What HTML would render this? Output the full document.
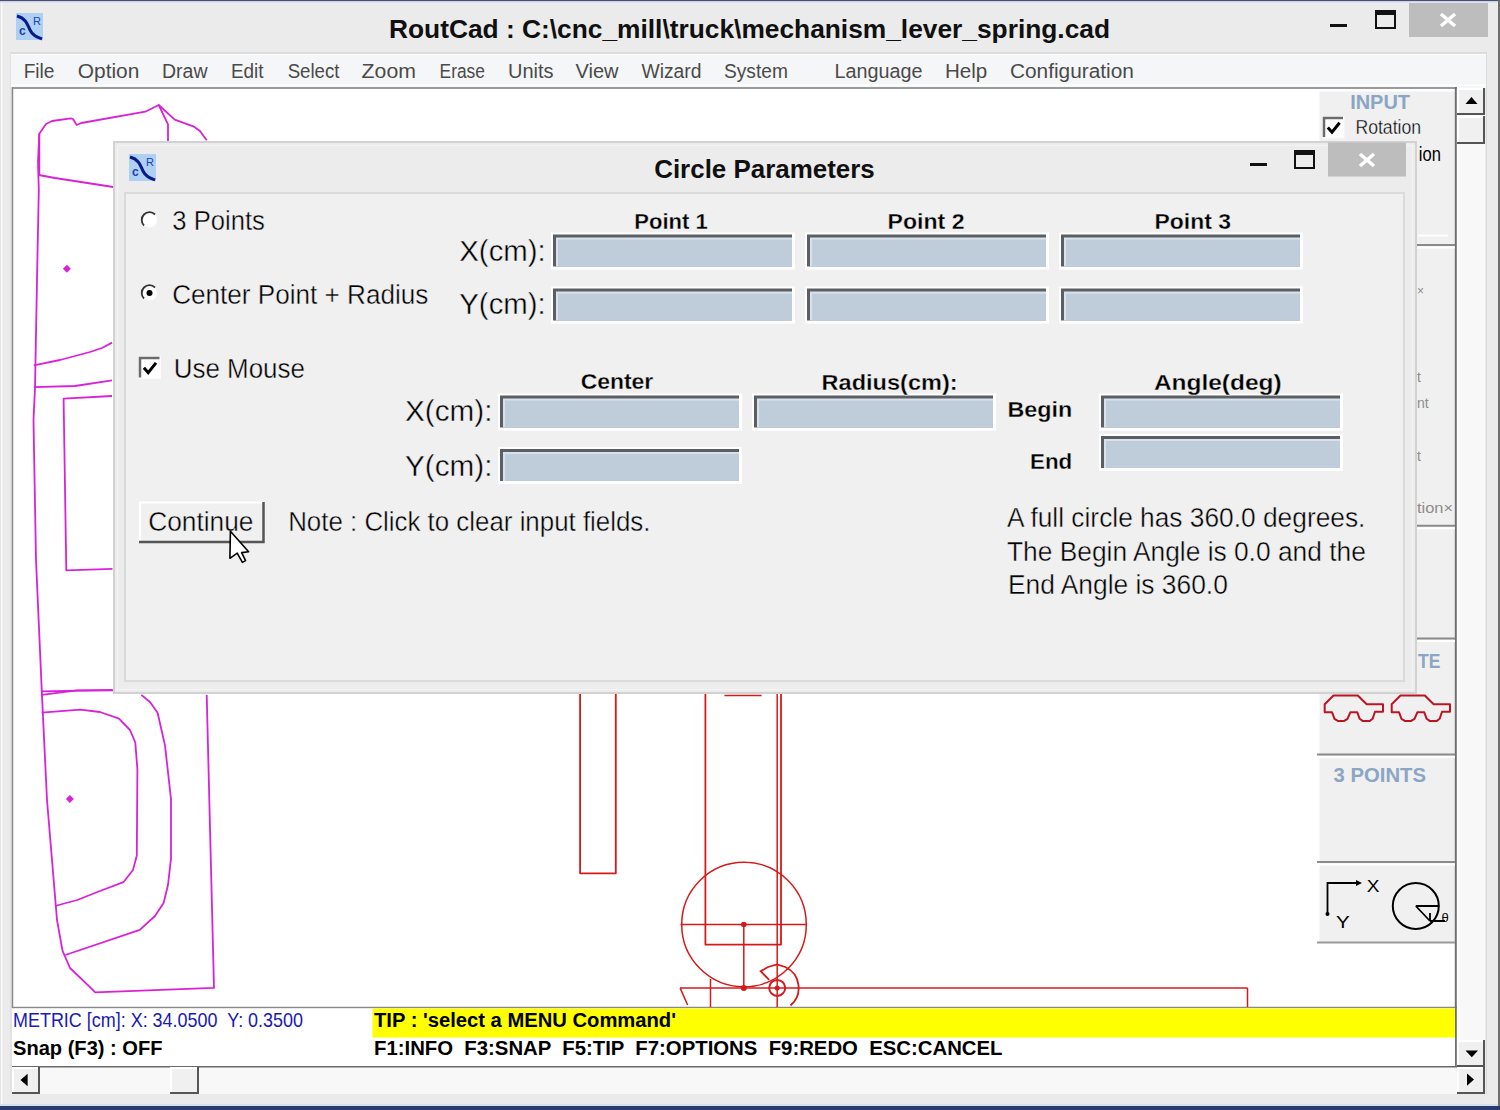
<!DOCTYPE html>
<html><head><meta charset="utf-8"><style>
html,body{margin:0;padding:0;width:1500px;height:1110px;overflow:hidden;background:#efefef}
svg{display:block}
</style></head><body>
<svg width="1500" height="1110" viewBox="0 0 1500 1110">
<rect x="0" y="0" width="1500" height="1110" fill="#ebebeb" />
<rect x="0" y="0" width="1" height="1110" fill="#e4e4e4" />
<rect x="1" y="0" width="1.5" height="1110" fill="#fafafa" />
<rect x="10" y="52" width="2" height="1040" fill="#e2e2e2" />
<rect x="0" y="0" width="1500" height="1.3" fill="#4a5078" />
<rect x="0" y="1.5" width="1500" height="1.5" fill="#dfe6f2" />
<rect x="0" y="1104" width="1500" height="2" fill="#d4e0ee" />
<rect x="0" y="1106" width="1500" height="4" fill="#2a3c6c" />
<rect x="1498" y="0" width="2" height="1106" fill="#6e6e6e" />
<rect x="3" y="3" width="1494" height="49" fill="#ebebeb" />
<rect x="16" y="13" width="27" height="27" fill="#aed0f2" />
<path d="M17,16 C25,18 27,23 30,30 C33,36 37,37 42,39" stroke="#0a1a8a" stroke-width="3" fill="none"/>
<text x="33" y="25" font-family="Liberation Sans" font-size="11" fill="#2040b0"    xml:space="preserve">R</text>
<text x="19" y="35" font-family="Liberation Sans" font-size="12" fill="#2040b0" font-weight="bold"   xml:space="preserve">c</text>
<text x="389" y="37.6" font-family="Liberation Sans" font-size="25.5" fill="#101010" font-weight="bold" textLength="721.0" lengthAdjust="spacingAndGlyphs"  xml:space="preserve">RoutCad : C:\cnc_mill\truck\mechanism_lever_spring.cad</text>
<rect x="1330" y="24" width="17" height="3" fill="#111" />
<rect x="1376" y="11" width="19" height="17" fill="none" stroke="#111" stroke-width="2"/>
<rect x="1376" y="11" width="19" height="4" fill="#111" />
<rect x="1409" y="3" width="79" height="34" fill="#bdbdbd" />
<path d="M1441,14 L1455,26 M1455,14 L1441,26" stroke="#fff" stroke-width="3.5"/>
<rect x="11" y="52" width="1476" height="36" fill="#f5f6f7" />
<rect x="11" y="52" width="1476" height="2" fill="#dcdcdc" />
<rect x="11" y="54" width="1476" height="1" fill="#fdfdfd" />
<rect x="11" y="84.5" width="1476" height="1.5" fill="#fdfdfd" />
<text x="23.7" y="77.5" font-family="Liberation Sans" font-size="20" fill="#4a4a4a"  textLength="30.8" lengthAdjust="spacingAndGlyphs"  xml:space="preserve">File</text>
<text x="77.8" y="77.5" font-family="Liberation Sans" font-size="20" fill="#4a4a4a"  textLength="61.5" lengthAdjust="spacingAndGlyphs"  xml:space="preserve">Option</text>
<text x="162" y="77.5" font-family="Liberation Sans" font-size="20" fill="#4a4a4a"  textLength="45.5" lengthAdjust="spacingAndGlyphs"  xml:space="preserve">Draw</text>
<text x="230.9" y="77.5" font-family="Liberation Sans" font-size="20" fill="#4a4a4a"  textLength="32.6" lengthAdjust="spacingAndGlyphs"  xml:space="preserve">Edit</text>
<text x="287.7" y="77.5" font-family="Liberation Sans" font-size="20" fill="#4a4a4a"  textLength="51.8" lengthAdjust="spacingAndGlyphs"  xml:space="preserve">Select</text>
<text x="361.6" y="77.5" font-family="Liberation Sans" font-size="20" fill="#4a4a4a"  textLength="54.3" lengthAdjust="spacingAndGlyphs"  xml:space="preserve">Zoom</text>
<text x="439.6" y="77.5" font-family="Liberation Sans" font-size="20" fill="#4a4a4a"  textLength="45.3" lengthAdjust="spacingAndGlyphs"  xml:space="preserve">Erase</text>
<text x="508" y="77.5" font-family="Liberation Sans" font-size="20" fill="#4a4a4a"  textLength="45.5" lengthAdjust="spacingAndGlyphs"  xml:space="preserve">Units</text>
<text x="575.5" y="77.5" font-family="Liberation Sans" font-size="20" fill="#4a4a4a"  textLength="43.0" lengthAdjust="spacingAndGlyphs"  xml:space="preserve">View</text>
<text x="641.5" y="77.5" font-family="Liberation Sans" font-size="20" fill="#4a4a4a"  textLength="60.0" lengthAdjust="spacingAndGlyphs"  xml:space="preserve">Wizard</text>
<text x="724" y="77.5" font-family="Liberation Sans" font-size="20" fill="#4a4a4a"  textLength="63.9" lengthAdjust="spacingAndGlyphs"  xml:space="preserve">System</text>
<text x="834.5" y="77.5" font-family="Liberation Sans" font-size="20" fill="#4a4a4a"  textLength="87.9" lengthAdjust="spacingAndGlyphs"  xml:space="preserve">Language</text>
<text x="944.9" y="77.5" font-family="Liberation Sans" font-size="20" fill="#4a4a4a"  textLength="42.3" lengthAdjust="spacingAndGlyphs"  xml:space="preserve">Help</text>
<text x="1010" y="77.5" font-family="Liberation Sans" font-size="20" fill="#4a4a4a"  textLength="123.8" lengthAdjust="spacingAndGlyphs"  xml:space="preserve">Configuration</text>
<rect x="12" y="87" width="1445" height="921" fill="#ffffff" />
<line x1="12" y1="88" x2="1457" y2="88" stroke="#7a7a7a" stroke-width="1.6" />
<line x1="12.5" y1="87" x2="12.5" y2="1008" stroke="#8a8a8a" stroke-width="1.5" />
<line x1="12" y1="1007.5" x2="1457" y2="1007.5" stroke="#8a8a8a" stroke-width="1.5" />
<polyline points="39.3,175.0 39.3,133.7 46.0,124.0 52.0,121.0 70.7,118.3 73.0,119.0 76.7,125.0 81.3,123.0 145.3,111.7 158.7,105.0 174.7,119.7 193.3,126.3 200.0,131.0 206.7,140.3" fill="none" stroke="#d822d8" stroke-width="1.8" stroke-linejoin="round"/>
<polyline points="158.7,105.0 168.0,124.3 168.0,142.0" fill="none" stroke="#d822d8" stroke-width="1.8" stroke-linejoin="round"/>
<polyline points="38.8,190.0 38.0,162.0 39.3,133.7" fill="none" stroke="#d822d8" stroke-width="1.8" stroke-linejoin="round"/>
<polyline points="38.8,175.0 55.0,178.0 113.3,187.0" fill="none" stroke="#d822d8" stroke-width="1.8" stroke-linejoin="round"/>
<polyline points="38.8,190.0 37.0,280.0 35.0,388.0 33.5,420.0 36.0,560.0 41.8,691.4 47.0,800.0 57.0,920.0 62.5,950.6 70.0,968.0 89.2,986.3 95.2,992.3 214.0,987.8 206.7,694.9" fill="none" stroke="#d822d8" stroke-width="1.8" stroke-linejoin="round"/>
<polyline points="33.8,365.4 60.0,360.0 90.0,352.0 102.0,348.0 112.1,342.6" fill="none" stroke="#d822d8" stroke-width="1.8" stroke-linejoin="round"/>
<polyline points="33.8,387.2 75.0,386.0 112.0,380.3" fill="none" stroke="#d822d8" stroke-width="1.8" stroke-linejoin="round"/>
<polyline points="112.0,396.0 63.6,398.7 66.3,570.3 112.5,568.9" fill="none" stroke="#d822d8" stroke-width="1.8" stroke-linejoin="round"/>
<polyline points="41.8,691.4 112.5,690.0" fill="none" stroke="#d822d8" stroke-width="1.8" stroke-linejoin="round"/>
<polyline points="41.6,694.9 77.3,690.4 113.0,690.4" fill="none" stroke="#d822d8" stroke-width="1.8" stroke-linejoin="round"/>
<polyline points="41.6,712.7 80.3,709.7 100.0,712.0 119.0,718.7 130.0,730.0 135.3,742.5 137.4,769.2 136.8,855.5 133.0,870.0 123.4,882.2 100.0,891.0 77.3,900.0 55.0,906.0" fill="none" stroke="#d822d8" stroke-width="1.8" stroke-linejoin="round"/>
<polyline points="141.3,694.9 150.0,702.0 157.6,712.7 165.0,745.4 171.0,799.0 171.0,858.4 168.0,885.0 163.6,903.0 155.0,916.0 139.8,929.8 65.4,955.0" fill="none" stroke="#d822d8" stroke-width="1.8" stroke-linejoin="round"/>
<path d="M66.9,264.7 L70.9,268.7 L66.9,272.7 L62.900000000000006,268.7 Z" fill="#d822d8"/>
<path d="M69.9,795 L73.9,799 L69.9,803 L65.9,799 Z" fill="#d822d8"/>
<polyline points="580.1,693.0 580.1,873.3 615.8,873.3 615.8,693.0" fill="none" stroke="#d41a1a" stroke-width="1.8" stroke-linejoin="round"/>
<polyline points="705.4,693.0 705.4,944.6 781.0,944.6 781.0,693.0" fill="none" stroke="#d41a1a" stroke-width="1.8" stroke-linejoin="round"/>
<line x1="777.2" y1="693" x2="777.2" y2="1007" stroke="#d41a1a" stroke-width="1.5" />
<line x1="724.4" y1="695.5" x2="761.6" y2="695.5" stroke="#d41a1a" stroke-width="1.5" />
<circle cx="744" cy="924.5" r="62.3" fill="none" stroke="#d41a1a" stroke-width="1.5"/>
<line x1="680.5" y1="924.5" x2="806.5" y2="924.5" stroke="#d41a1a" stroke-width="1.5" />
<line x1="743.8" y1="924.5" x2="743.8" y2="988" stroke="#d41a1a" stroke-width="1.5" />
<line x1="680.1" y1="987.9" x2="1247.5" y2="987.9" stroke="#d41a1a" stroke-width="1.5" />
<line x1="1247.5" y1="987.9" x2="1247.5" y2="1007" stroke="#d41a1a" stroke-width="1.5" />
<line x1="680.1" y1="987.9" x2="687.6" y2="1005" stroke="#d41a1a" stroke-width="1.5" />
<line x1="710.5" y1="979" x2="710.5" y2="1007" stroke="#d41a1a" stroke-width="1.5" />
<circle cx="777.2" cy="987.9" r="8" fill="none" stroke="#d41a1a" stroke-width="2"/>
<circle cx="743.8" cy="924.5" r="2.8" fill="#d41a1a"/>
<circle cx="743.8" cy="987.9" r="3" fill="#d41a1a"/>
<circle cx="777.2" cy="987.9" r="2.5" fill="#d41a1a"/>
<path d="M769.2,979.9 L760.7,971.3 L768.1,967 L777,964.5 L785.2,967 A23,23 0 0 1 790.5,1005.5" fill="none" stroke="#d41a1a" stroke-width="1.8"/>
<rect x="1319.5" y="91.5" width="136" height="851" fill="#f0f0f0" />
<line x1="1455.8" y1="87" x2="1455.8" y2="1067" stroke="#707070" stroke-width="2" />
<text x="1350.2" y="109" font-family="Liberation Sans" font-size="21" fill="#8ba5c5" font-weight="bold" textLength="59.8" lengthAdjust="spacingAndGlyphs"  xml:space="preserve">INPUT</text>
<rect x="1322.5" y="116.5" width="22" height="22" fill="#fbfbfb" />
<rect x="1324" y="118" width="19" height="19" fill="#ffffff" />
<path d="M1324,137 L1324,118 L1343,118" stroke="#6b6b6b" stroke-width="2.5" fill="none"/>
<path d="M1327.8,127.5 L1331.98,132.25 L1339.58,122.75" stroke="#000" stroke-width="3" fill="none"/>
<text x="1355.4" y="133.9" font-family="Liberation Sans" font-size="19.5" fill="#000"  textLength="65.7" lengthAdjust="spacingAndGlyphs"  stroke="#f0f0f0" stroke-width="0.35" xml:space="preserve">Rotation</text>
<text x="1418.8" y="160.7" font-family="Liberation Sans" font-size="19.5" fill="#000"  textLength="22.1" lengthAdjust="spacingAndGlyphs"  xml:space="preserve">ion</text>
<line x1="1418" y1="235.5" x2="1448" y2="235.5" stroke="#ffffff" stroke-width="2" />
<line x1="1317" y1="245" x2="1455" y2="245" stroke="#8a8a8a" stroke-width="2" />
<line x1="1317" y1="247.5" x2="1455" y2="247.5" stroke="#ffffff" stroke-width="2" />
<line x1="1317" y1="525.7" x2="1455" y2="525.7" stroke="#8a8a8a" stroke-width="2" />
<line x1="1317" y1="528.2" x2="1455" y2="528.2" stroke="#ffffff" stroke-width="2" />
<line x1="1317" y1="638.5" x2="1455" y2="638.5" stroke="#8a8a8a" stroke-width="2" />
<line x1="1317" y1="641.0" x2="1455" y2="641.0" stroke="#ffffff" stroke-width="2" />
<line x1="1317" y1="754.5" x2="1455" y2="754.5" stroke="#8a8a8a" stroke-width="2" />
<line x1="1317" y1="757.0" x2="1455" y2="757.0" stroke="#ffffff" stroke-width="2" />
<line x1="1317" y1="862" x2="1455" y2="862" stroke="#8a8a8a" stroke-width="2" />
<line x1="1317" y1="864.5" x2="1455" y2="864.5" stroke="#ffffff" stroke-width="2" />
<text x="1417" y="382" font-family="Liberation Sans" font-size="14" fill="#8c8c8c"    xml:space="preserve">t</text>
<text x="1417" y="407.5" font-family="Liberation Sans" font-size="14" fill="#8c8c8c"    xml:space="preserve">nt</text>
<text x="1417" y="461" font-family="Liberation Sans" font-size="14" fill="#8c8c8c"    xml:space="preserve">t</text>
<text x="1417" y="513" font-family="Liberation Sans" font-size="14" fill="#8c8c8c"  textLength="36.0" lengthAdjust="spacingAndGlyphs"  xml:space="preserve">tion×</text>
<text x="1417" y="295" font-family="Liberation Sans" font-size="12" fill="#8c8c8c"    xml:space="preserve">×</text>
<text x="1418" y="668" font-family="Liberation Sans" font-size="21" fill="#8ba5c5" font-weight="bold" textLength="22.4" lengthAdjust="spacingAndGlyphs"  xml:space="preserve">TE</text>
<polygon points="1333.5,695.5 1357.8,695.5 1366.7,704.3 1383.0,704.3 1383.0,711.8 1375.0,711.8 1372.7,718.8 1369.5,721.1 1362.9,721.1 1359.7,718.8 1357.3,712.3 1350.3,712.3 1347.5,718.8 1343.8,721.1 1338.2,721.1 1334.5,718.8 1332.1,712.3 1324.7,712.3 1324.7,704.3" fill="none" stroke="#bc1420" stroke-width="2" stroke-linejoin="round"/>
<polygon points="1400.5,695.5 1424.8,695.5 1433.7,704.3 1450.0,704.3 1450.0,711.8 1442.0,711.8 1439.7,718.8 1436.5,721.1 1429.9,721.1 1426.7,718.8 1424.3,712.3 1417.3,712.3 1414.5,718.8 1410.8,721.1 1405.2,721.1 1401.5,718.8 1399.1,712.3 1391.7,712.3 1391.7,704.3" fill="none" stroke="#bc1420" stroke-width="2" stroke-linejoin="round"/>
<text x="1333.6" y="781.6" font-family="Liberation Sans" font-size="21" fill="#8ba5c5" font-weight="bold" textLength="92.4" lengthAdjust="spacingAndGlyphs"  xml:space="preserve">3 POINTS</text>
<line x1="1317" y1="942.5" x2="1455" y2="942.5" stroke="#9a9a9a" stroke-width="2" />
<path d="M1327.5,914 L1327.5,883 L1360,883" stroke="#000" stroke-width="1.8" fill="none"/>
<path d="M1356,880 L1362,883 L1356,886 Z" fill="#000"/>
<circle cx="1327.5" cy="914" r="2" fill="#000"/>
<text x="1366.8" y="892" font-family="Liberation Sans" font-size="17" fill="#000"  textLength="12.7" lengthAdjust="spacingAndGlyphs"  xml:space="preserve">X</text>
<text x="1336" y="928" font-family="Liberation Sans" font-size="17" fill="#000"  textLength="13.7" lengthAdjust="spacingAndGlyphs"  xml:space="preserve">Y</text>
<circle cx="1415.8" cy="906" r="23" fill="none" stroke="#000" stroke-width="2"/>
<path d="M1415.8,906 L1438.8,906 M1415.8,906 L1430,921 M1430,921 L1430,913 M1430,921 L1445,921" stroke="#000" stroke-width="1.8" fill="none"/>
<text x="1441.5" y="922" font-family="Liberation Sans" font-size="13" fill="#000"    xml:space="preserve">θ</text>
<rect x="12" y="1008.5" width="1443" height="58" fill="#ffffff" />
<rect x="372.5" y="1008.5" width="1082.5" height="29" fill="#ffff00" />
<text x="13" y="1026.5" font-family="Liberation Sans" font-size="21" fill="#1a1ab4"  textLength="290.0" lengthAdjust="spacingAndGlyphs"  xml:space="preserve">METRIC [cm]: X: 34.0500  Y: 0.3500</text>
<text x="13" y="1055" font-family="Liberation Sans" font-size="20" fill="#000" font-weight="bold" textLength="149.5" lengthAdjust="spacingAndGlyphs"  xml:space="preserve">Snap (F3) : OFF</text>
<text x="374" y="1026.5" font-family="Liberation Sans" font-size="20" fill="#000" font-weight="bold" textLength="302.0" lengthAdjust="spacingAndGlyphs"  xml:space="preserve">TIP : 'select a MENU Command'</text>
<text x="374" y="1055" font-family="Liberation Sans" font-size="20" fill="#000" font-weight="bold" textLength="628.5" lengthAdjust="spacingAndGlyphs"  xml:space="preserve">F1:INFO  F3:SNAP  F5:TIP  F7:OPTIONS  F9:REDO  ESC:CANCEL</text>
<rect x="1457" y="87" width="28" height="1007" fill="#f8f8f8" />
<rect x="1457" y="87" width="1.5" height="1007" fill="#ffffff" />
<rect x="1486" y="52" width="1" height="1042" fill="#dadada" />
<rect x="1457" y="88" width="28" height="27" fill="#f0f0f0" />
<path d="M1458,114 L1458,89 L1484,89" stroke="#fff" stroke-width="2" fill="none"/>
<path d="M1457,114 L1484,114 L1484,88" stroke="#555" stroke-width="2" fill="none"/>
<path d="M1465.5,104 L1477.5,104 L1471.5,97 Z" fill="#000"/>
<rect x="1457" y="116" width="28" height="28" fill="#f0f0f0" />
<path d="M1458,143 L1458,117 L1484,117" stroke="#fff" stroke-width="2" fill="none"/>
<path d="M1457,143 L1484,143 L1484,116" stroke="#555" stroke-width="2" fill="none"/>
<rect x="1457" y="1040" width="28" height="27" fill="#f0f0f0" />
<path d="M1458,1066 L1458,1041 L1484,1041" stroke="#fff" stroke-width="2" fill="none"/>
<path d="M1457,1066 L1484,1066 L1484,1040" stroke="#555" stroke-width="2" fill="none"/>
<path d="M1465.5,1050.5 L1478,1050.5 L1471.8,1057.3 Z" fill="#000"/>
<rect x="12" y="1066" width="1445" height="28" fill="#f8f8f8" />
<line x1="12" y1="1066.8" x2="1457" y2="1066.8" stroke="#6a6a6a" stroke-width="1.5" />
<rect x="12" y="1067" width="28" height="27" fill="#f0f0f0" />
<path d="M13,1093 L13,1068 L39,1068" stroke="#fff" stroke-width="2" fill="none"/>
<path d="M12,1093 L39,1093 L39,1067" stroke="#555" stroke-width="2" fill="none"/>
<path d="M27.6,1073.8 L27.6,1086.2 L20.5,1080 Z" fill="#000"/>
<rect x="170" y="1067" width="29" height="27" fill="#f0f0f0" />
<path d="M171,1093 L171,1068 L198,1068" stroke="#fff" stroke-width="2" fill="none"/>
<path d="M170,1093 L198,1093 L198,1067" stroke="#555" stroke-width="2" fill="none"/>
<rect x="1457" y="1067" width="28" height="27" fill="#f0f0f0" />
<path d="M1458,1093 L1458,1068 L1484,1068" stroke="#fff" stroke-width="2" fill="none"/>
<path d="M1457,1093 L1484,1093 L1484,1067" stroke="#555" stroke-width="2" fill="none"/>
<path d="M1467,1073.5 L1467,1085.7 L1474,1079.6 Z" fill="#000"/>
<rect x="12" y="1094" width="1474" height="10" fill="#eaeaea" />
<rect x="113" y="141" width="1304" height="553" fill="#ececec" />
<rect x="114" y="142" width="1302" height="551" fill="none" stroke="#d2d2d2" stroke-width="2"/>
<rect x="117.5" y="145.5" width="1295" height="544" fill="none" stroke="#f4f4f4" stroke-width="1"/>
<rect x="129" y="154" width="27" height="27" fill="#aed0f2" />
<path d="M130,157 C138,159 140,164 143,171 C146,177 150,178 155,180" stroke="#0a1a8a" stroke-width="3" fill="none"/>
<text x="146" y="166" font-family="Liberation Sans" font-size="11" fill="#2040b0"    xml:space="preserve">R</text>
<text x="132" y="176" font-family="Liberation Sans" font-size="12" fill="#2040b0" font-weight="bold"   xml:space="preserve">c</text>
<text x="654.2" y="177.6" font-family="Liberation Sans" font-size="25" fill="#101010" font-weight="bold" textLength="220.6" lengthAdjust="spacingAndGlyphs"  xml:space="preserve">Circle Parameters</text>
<rect x="1250" y="163" width="17" height="3" fill="#111" />
<rect x="1295" y="151" width="19" height="17" fill="none" stroke="#111" stroke-width="2"/>
<rect x="1295" y="151" width="19" height="4" fill="#111" />
<rect x="1328" y="142.5" width="78" height="34" fill="#bdbdbd" />
<path d="M1360,154 L1374,166 M1374,154 L1360,166" stroke="#fff" stroke-width="3.5"/>
<rect x="124" y="192" width="1281" height="490" fill="#f0f0f0" />
<rect x="125" y="193" width="1279" height="488" fill="none" stroke="#dadada" stroke-width="2"/>
<circle cx="149.5" cy="220" r="7.5" fill="#fff"/>
<path d="M144.0,225.5 A7.5,7.5 0 0 1 155.0,214.5" stroke="#333" stroke-width="1.8" fill="none"/>
<circle cx="149.5" cy="293" r="7.5" fill="#fff"/>
<path d="M144.0,298.5 A7.5,7.5 0 0 1 155.0,287.5" stroke="#333" stroke-width="1.8" fill="none"/>
<circle cx="149.5" cy="293" r="3" fill="#000"/>
<text x="172.3" y="230.3" font-family="Liberation Sans" font-size="27" fill="#000"  textLength="92.5" lengthAdjust="spacingAndGlyphs"  stroke="#f0f0f0" stroke-width="0.4" xml:space="preserve">3 Points</text>
<text x="172.2" y="303.9" font-family="Liberation Sans" font-size="27" fill="#000"  textLength="256.2" lengthAdjust="spacingAndGlyphs"  stroke="#f0f0f0" stroke-width="0.4" xml:space="preserve">Center Point + Radius</text>
<rect x="138.5" y="356.5" width="22.5" height="22.5" fill="#fbfbfb" />
<rect x="140" y="358" width="19.5" height="19.5" fill="#ffffff" />
<path d="M140,377.5 L140,358 L159.5,358" stroke="#6b6b6b" stroke-width="2.5" fill="none"/>
<path d="M143.9,367.75 L148.19,372.625 L155.99,362.875" stroke="#000" stroke-width="3" fill="none"/>
<text x="173.7" y="377.7" font-family="Liberation Sans" font-size="27" fill="#000"  textLength="131.2" lengthAdjust="spacingAndGlyphs"  stroke="#f0f0f0" stroke-width="0.4" xml:space="preserve">Use Mouse</text>
<rect x="551" y="232.5" width="244" height="37.0" fill="#ffffff" />
<rect x="553" y="234.5" width="239" height="32.0" fill="#5b5e62" />
<rect x="556" y="237.5" width="236" height="29.0" fill="#d9e2ea" />
<rect x="558" y="239.5" width="234" height="27.0" fill="#bfcdda" />
<rect x="551" y="286.5" width="244" height="37.0" fill="#ffffff" />
<rect x="553" y="288.5" width="239" height="32.0" fill="#5b5e62" />
<rect x="556" y="291.5" width="236" height="29.0" fill="#d9e2ea" />
<rect x="558" y="293.5" width="234" height="27.0" fill="#bfcdda" />
<rect x="805" y="232.5" width="244" height="37.0" fill="#ffffff" />
<rect x="807" y="234.5" width="239" height="32.0" fill="#5b5e62" />
<rect x="810" y="237.5" width="236" height="29.0" fill="#d9e2ea" />
<rect x="812" y="239.5" width="234" height="27.0" fill="#bfcdda" />
<rect x="805" y="286.5" width="244" height="37.0" fill="#ffffff" />
<rect x="807" y="288.5" width="239" height="32.0" fill="#5b5e62" />
<rect x="810" y="291.5" width="236" height="29.0" fill="#d9e2ea" />
<rect x="812" y="293.5" width="234" height="27.0" fill="#bfcdda" />
<rect x="1059" y="232.5" width="244" height="37.0" fill="#ffffff" />
<rect x="1061" y="234.5" width="239" height="32.0" fill="#5b5e62" />
<rect x="1064" y="237.5" width="236" height="29.0" fill="#d9e2ea" />
<rect x="1066" y="239.5" width="234" height="27.0" fill="#bfcdda" />
<rect x="1059" y="286.5" width="244" height="37.0" fill="#ffffff" />
<rect x="1061" y="288.5" width="239" height="32.0" fill="#5b5e62" />
<rect x="1064" y="291.5" width="236" height="29.0" fill="#d9e2ea" />
<rect x="1066" y="293.5" width="234" height="27.0" fill="#bfcdda" />
<text x="634.3" y="229" font-family="Liberation Sans" font-size="22" fill="#000" font-weight="bold" textLength="73.5" lengthAdjust="spacingAndGlyphs"  stroke="#f0f0f0" stroke-width="0.3" xml:space="preserve">Point 1</text>
<text x="887.6" y="229" font-family="Liberation Sans" font-size="22" fill="#000" font-weight="bold" textLength="76.9" lengthAdjust="spacingAndGlyphs"  stroke="#f0f0f0" stroke-width="0.3" xml:space="preserve">Point 2</text>
<text x="1154.5" y="229" font-family="Liberation Sans" font-size="22" fill="#000" font-weight="bold" textLength="76.5" lengthAdjust="spacingAndGlyphs"  stroke="#f0f0f0" stroke-width="0.3" xml:space="preserve">Point 3</text>
<text x="459.3" y="260.7" font-family="Liberation Sans" font-size="29" fill="#000"  textLength="86.4" lengthAdjust="spacingAndGlyphs"  stroke="#f0f0f0" stroke-width="0.4" xml:space="preserve">X(cm):</text>
<text x="459.3" y="314" font-family="Liberation Sans" font-size="29" fill="#000"  textLength="86.4" lengthAdjust="spacingAndGlyphs"  stroke="#f0f0f0" stroke-width="0.4" xml:space="preserve">Y(cm):</text>
<rect x="498" y="393.5" width="244" height="37.0" fill="#ffffff" />
<rect x="500" y="395.5" width="239" height="32.0" fill="#5b5e62" />
<rect x="503" y="398.5" width="236" height="29.0" fill="#d9e2ea" />
<rect x="505" y="400.5" width="234" height="27.0" fill="#bfcdda" />
<rect x="752" y="393.5" width="244" height="37.0" fill="#ffffff" />
<rect x="754" y="395.5" width="239" height="32.0" fill="#5b5e62" />
<rect x="757" y="398.5" width="236" height="29.0" fill="#d9e2ea" />
<rect x="759" y="400.5" width="234" height="27.0" fill="#bfcdda" />
<rect x="1099" y="393.5" width="244" height="37.0" fill="#ffffff" />
<rect x="1101" y="395.5" width="239" height="32.0" fill="#5b5e62" />
<rect x="1104" y="398.5" width="236" height="29.0" fill="#d9e2ea" />
<rect x="1106" y="400.5" width="234" height="27.0" fill="#bfcdda" />
<rect x="498" y="447" width="244" height="37" fill="#ffffff" />
<rect x="500" y="449" width="239" height="32" fill="#5b5e62" />
<rect x="503" y="452" width="236" height="29" fill="#d9e2ea" />
<rect x="505" y="454" width="234" height="27" fill="#bfcdda" />
<rect x="1099" y="434" width="244" height="37" fill="#ffffff" />
<rect x="1101" y="436" width="239" height="32" fill="#5b5e62" />
<rect x="1104" y="439" width="236" height="29" fill="#d9e2ea" />
<rect x="1106" y="441" width="234" height="27" fill="#bfcdda" />
<text x="580.7" y="389" font-family="Liberation Sans" font-size="22" fill="#000" font-weight="bold" textLength="72.6" lengthAdjust="spacingAndGlyphs"  stroke="#f0f0f0" stroke-width="0.3" xml:space="preserve">Center</text>
<text x="821.6" y="390" font-family="Liberation Sans" font-size="22" fill="#000" font-weight="bold" textLength="136.0" lengthAdjust="spacingAndGlyphs"  stroke="#f0f0f0" stroke-width="0.3" xml:space="preserve">Radius(cm):</text>
<text x="1153.9" y="390" font-family="Liberation Sans" font-size="22" fill="#000" font-weight="bold" textLength="127.8" lengthAdjust="spacingAndGlyphs"  stroke="#f0f0f0" stroke-width="0.3" xml:space="preserve">Angle(deg)</text>
<text x="1007.5" y="416.6" font-family="Liberation Sans" font-size="22" fill="#000" font-weight="bold" textLength="64.8" lengthAdjust="spacingAndGlyphs"  stroke="#f0f0f0" stroke-width="0.3" xml:space="preserve">Begin</text>
<text x="1030" y="468.8" font-family="Liberation Sans" font-size="22" fill="#000" font-weight="bold" textLength="42.3" lengthAdjust="spacingAndGlyphs"  stroke="#f0f0f0" stroke-width="0.3" xml:space="preserve">End</text>
<text x="405" y="421" font-family="Liberation Sans" font-size="29" fill="#000"  textLength="87.4" lengthAdjust="spacingAndGlyphs"  stroke="#f0f0f0" stroke-width="0.4" xml:space="preserve">X(cm):</text>
<text x="405" y="475.7" font-family="Liberation Sans" font-size="29" fill="#000"  textLength="87.4" lengthAdjust="spacingAndGlyphs"  stroke="#f0f0f0" stroke-width="0.4" xml:space="preserve">Y(cm):</text>
<rect x="139" y="502" width="125" height="41" fill="#f0f0f0" />
<path d="M140,542 L140,502.5 L263,502.5" stroke="#fff" stroke-width="2" fill="none"/>
<path d="M139,542 L263.5,542 L263.5,502" stroke="#555" stroke-width="2.5" fill="none"/>
<text x="148.2" y="530.6" font-family="Liberation Sans" font-size="27" fill="#000"  textLength="105.2" lengthAdjust="spacingAndGlyphs"  stroke="#f0f0f0" stroke-width="0.4" xml:space="preserve">Continue</text>
<text x="288.2" y="530.6" font-family="Liberation Sans" font-size="27" fill="#000"  textLength="362.3" lengthAdjust="spacingAndGlyphs"  stroke="#f0f0f0" stroke-width="0.4" xml:space="preserve">Note : Click to clear input fields.</text>
<text x="1007" y="527.4" font-family="Liberation Sans" font-size="27" fill="#000"  textLength="358.4" lengthAdjust="spacingAndGlyphs"  stroke="#f0f0f0" stroke-width="0.4" xml:space="preserve">A full circle has 360.0 degrees.</text>
<text x="1007" y="561" font-family="Liberation Sans" font-size="27" fill="#000"  textLength="358.8" lengthAdjust="spacingAndGlyphs"  stroke="#f0f0f0" stroke-width="0.4" xml:space="preserve">The Begin Angle is 0.0 and the</text>
<text x="1008" y="594" font-family="Liberation Sans" font-size="27" fill="#000"  textLength="219.8" lengthAdjust="spacingAndGlyphs"  stroke="#f0f0f0" stroke-width="0.4" xml:space="preserve">End Angle is 360.0</text>
<path d="M230.4,531.2 L229.9,558.3 L237.2,553.2 L242.4,562.4 L245.6,560.6 L241.6,552.6 L248.6,551.8 Z" fill="#fff" stroke="#000" stroke-width="1.6" stroke-linejoin="round"/>
</svg>
</body></html>
